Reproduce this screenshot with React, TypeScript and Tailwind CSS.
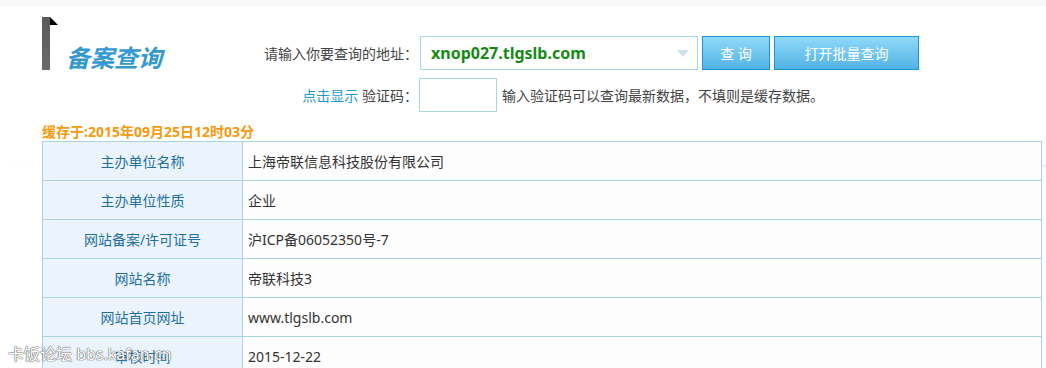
const font = "font-['Segoe_UI','Noto_Sans','Noto_Sans_CJK_SC',sans-serif]";

const rows: [string, string][] = [
  ['主办单位名称', '上海帝联信息科技股份有限公司'],
  ['主办单位性质', '企业'],
  ['网站备案/许可证号', '沪ICP备06052350号-7'],
  ['网站名称', '帝联科技3'],
  ['网站首页网址', 'www.tlgslb.com'],
  ['审核时间', '2015-12-22'],
];

function Logo() {
  return (
    <div className="mt-[11px] flex h-[53px] w-[188px] items-end self-start">
      <div className="relative h-[53px] w-[8px] bg-gradient-to-b from-[#5b5b5b] to-[#6a6a6a]">
        <svg className="absolute left-[8px] top-0" width="8" height="8" viewBox="0 0 8 8">
          <polygon points="0,0 0,8 8,8" fill="#000" />
        </svg>
      </div>
      <div className="mb-[-3px] ml-[16px] text-[24px] font-bold italic leading-[30px] text-[#3499d3]">备案查询</div>
    </div>
  );
}

function SearchForm() {
  return (
    <div className="flex flex-col gap-[8px] pt-[30px] text-[14px] text-[#444]">
      <div className="flex items-center">
        <div className="w-[188px] text-right">请输入你要查询的地址：</div>
        <div className="ml-[2px] flex h-[34px] w-[278px] items-center justify-between border border-[#a9d6e4] bg-white pl-[10px] pr-[8px]">
          <span className="text-[16px] font-bold text-[#158a15]">xnop027.tlgslb.com</span>
          <svg width="12" height="7" viewBox="0 0 12 7">
            <polygon points="0,0 12,0 6,7" fill="#cfe3ec" />
          </svg>
        </div>
        <button className="ml-[4px] h-[34px] w-[68px] border border-[#1797d8] bg-gradient-to-b from-[#90d8fa] to-[#50b3e4] text-[14px] text-white">
          查 询
        </button>
        <button className="ml-[4px] h-[34px] w-[145px] border border-[#1797d8] bg-gradient-to-b from-[#90d8fa] to-[#50b3e4] text-[14px] text-white">
          打开批量查询
        </button>
      </div>
      <div className="flex items-center">
        <div className="w-[188px] text-right">
          <span className="text-[#1b9ad3]">点击显示</span> 验证码：
        </div>
        <div className="ml-[1px] h-[34px] w-[78px] border border-[#a9d6e4] bg-white" />
        <div className="ml-[5px]">输入验证码可以查询最新数据，不填则是缓存数据。</div>
      </div>
    </div>
  );
}

export default function App() {
  return (
    <div className={`relative h-[368px] w-[1046px] overflow-hidden bg-white ${font}`}>
      <div className="h-[6px] bg-[#f7f7f5]" />
      <div className="absolute left-0 top-[164px] h-[3px] w-full bg-gradient-to-r from-transparent via-[#ececec] to-[#f2f2f2]" />
      <div className="relative pl-[42px]">
        <div className="flex">
          <Logo />
          <SearchForm />
        </div>
        <div className="mt-[10px] h-[19px] text-[14px] font-bold leading-[19px] text-[#f59a0c]">
          缓存于:2015年09月25日12时03分
        </div>
        <table className="w-[1000px] border-collapse text-[14px]">
          <tbody>
            {rows.map(([k, v]) => (
              <tr key={k} className="h-[39px]">
                <td className="w-[200px] border border-[#a9d4e1] bg-[#ebf4fc] text-center text-[#1f6fa3]">{k}</td>
                <td className="border border-[#a9d4e1] bg-[#fdfdfd] pl-[5px] text-[#333]">{v}</td>
              </tr>
            ))}
          </tbody>
        </table>
      </div>
      <div className="absolute left-[8px] top-[342px] text-[16px] text-white [text-shadow:0_0_1px_#666,0_0_1px_#666,0_0_1px_#666]">
        卡饭论坛 bbs.kafan.cn
      </div>
    </div>
  );
}
